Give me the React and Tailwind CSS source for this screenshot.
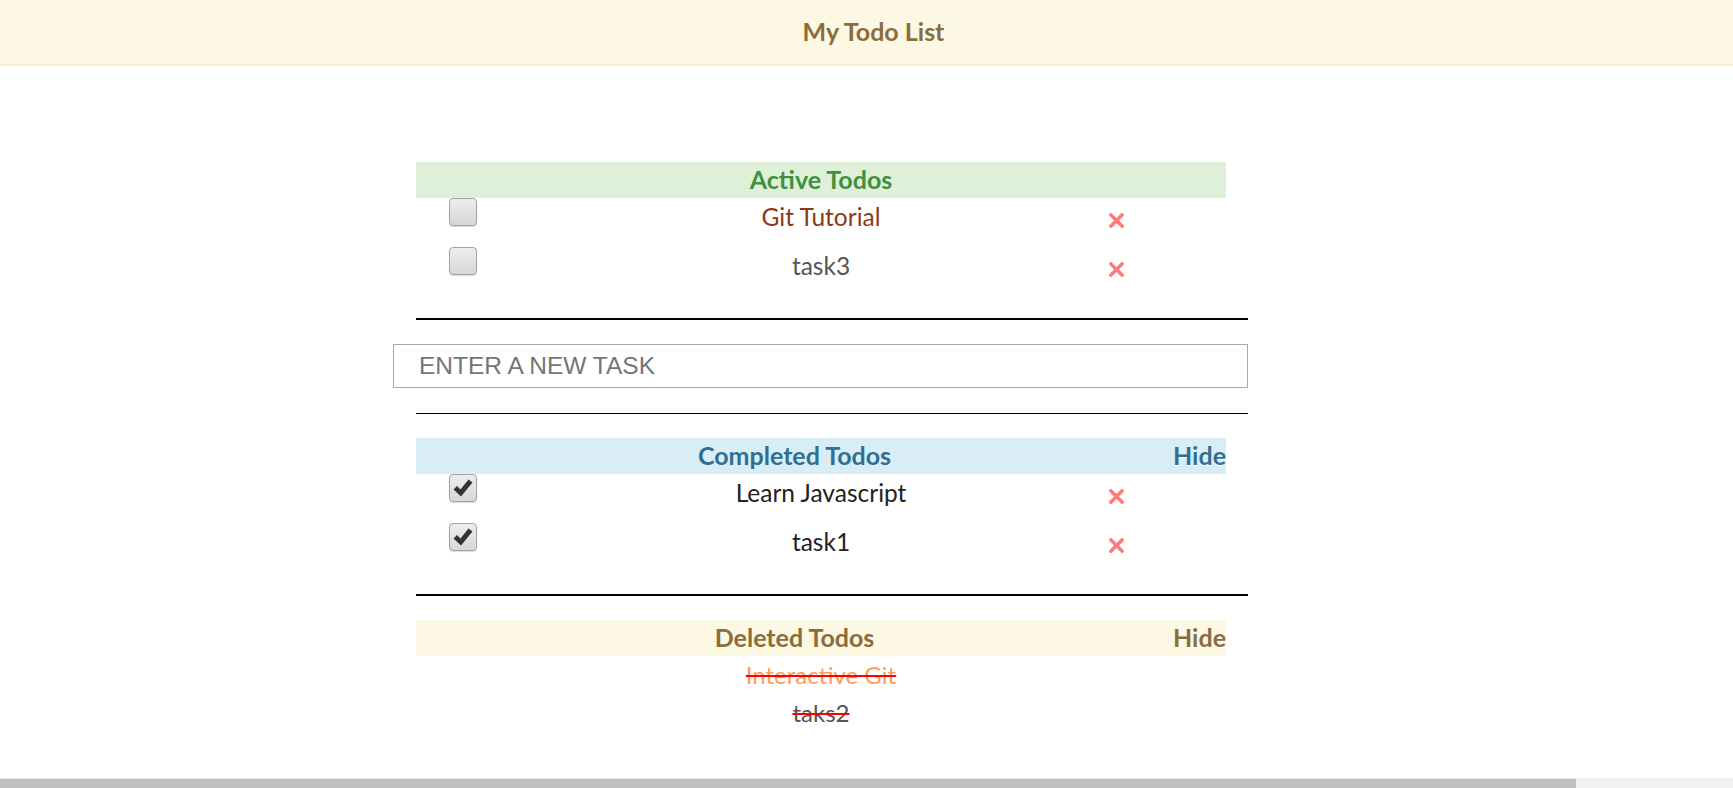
import React from "react"

const font = { fontFamily: "Lato, 'Open Sans', sans-serif" }

const activeTodos = [
    { id: 1, text: "Git Tutorial", color: "text-[#8b3a12]" },
    { id: 2, text: "task3", color: "text-[#555555]" },
]

const completedTodos = [
    { id: 3, text: "Learn Javascript", color: "text-[#222222]" },
    { id: 4, text: "task1", color: "text-[#222222]" },
]

const deletedTodos = [
    { id: 5, text: "Interactive Git", color: "text-[#ff9a5c]" },
    { id: 6, text: "taks2", color: "text-[#555555]" },
]

// ─── small drawings ───

const CheckBox = ({ checked }) => (
    <div className="w-[28px] h-[28px] rounded-[4px] border-[1.5px] border-[#a3a3a3] bg-gradient-to-b from-[#ededed] to-[#d7d7d7] shadow-[0_1px_1px_rgba(0,0,0,0.15)] flex items-center justify-center">
        {checked && (
            <svg width="22" height="20" viewBox="0 0 22 20">
                <path d="M1.5 11.5 L5 8 L8.5 11.5 L16.5 1.5 L20.5 4.5 L9 18.5 Z" fill="#333" />
            </svg>
        )}
    </div>
)

const DeleteIcon = () => (
    <svg width="15" height="15" viewBox="0 0 15 15">
        <path d="M2 2 L13 13 M13 2 L2 13" stroke="#ff7b7b" strokeWidth="3.6" strokeLinecap="square" />
    </svg>
)

// ─── Section header ───

const SectionHeader = ({ title, bg, color, hide }) => (
    <div className={`w-[810px] h-[36px] flex items-center font-bold text-[25px] ${bg} ${color}`}>
        <span className="flex-1 text-center">{title}</span>
        {hide && <span className="[text-shadow:0_1px_0_#fff]">Hide</span>}
    </div>
)

// ─── TodoRow ───

const TodoRow = ({ todo, checked }) => (
    <div className="w-[810px] h-[49px] grid grid-cols-[160px_1fr_160px] items-start">
        <div className="pl-[33px]">
            <CheckBox checked={checked} />
        </div>
        <div className={`pt-[5px] leading-[28px] text-[24.5px] text-center ${todo.color}`}>{todo.text}</div>
        <div className="pt-[15px] pl-[43px]">
            <DeleteIcon />
        </div>
    </div>
)

export default function App() {
    return (
        <div className="h-screen w-full flex flex-col overflow-hidden bg-white" style={font}>
            <header className="h-[66px] shrink-0 bg-[#fcf8e3] border-b-2 border-[#faefc8] flex items-center justify-center pl-[14px]">
                <h1 className="text-[25px] font-bold text-[#8a6d3b]">My Todo List</h1>
            </header>

            <main className="flex-1 pl-[416px] pt-[96px]">
                <div className="w-[832px] flex flex-col">
                    <SectionHeader title="Active Todos" bg="bg-[#dff0d8]" color="text-[#3e923f]" />
                    {activeTodos.map(t => <TodoRow key={t.id} todo={t} checked={false} />)}

                    <hr className="mt-[22px] border-0 h-[2px] bg-black" />

                    <input
                        type="text"
                        placeholder="ENTER A NEW TASK"
                        className="mt-[24px] -ml-[23px] w-[855px] h-[44px] border border-[#a9a9a9] pl-[25px] text-[24.5px] placeholder:text-[#757575] outline-none"
                        style={{ fontFamily: "'Liberation Sans', Arial, sans-serif" }}
                    />

                    <hr className="mt-[25px] border-0 h-[1px] bg-black" />

                    <div className="mt-[24px]">
                        <SectionHeader title="Completed Todos" bg="bg-[#d9edf7]" color="text-[#2f6f91]" hide />
                    </div>
                    {completedTodos.map(t => <TodoRow key={t.id} todo={t} checked />)}

                    <hr className="mt-[22px] border-0 h-[2px] bg-black" />

                    <div className="mt-[24px]">
                        <SectionHeader title="Deleted Todos" bg="bg-[#fcf8e3]" color="text-[#8a6d3b]" hide />
                    </div>
                    <ul className="w-[810px]">
                        {deletedTodos.map(t => (
                            <li key={t.id} className="h-[38px] flex items-center justify-center">
                                <span className={`text-[24px] line-through decoration-[#ff0000] decoration-2 ${t.color}`}>
                                    {t.text}
                                </span>
                            </li>
                        ))}
                    </ul>
                </div>
            </main>

            <div className="h-[10px] shrink-0 flex border-t border-[#e8e8e8]">
                <div className="w-[1576px] bg-[#c1c1c1]" />
                <div className="flex-1 bg-[#f1f1f1]" />
            </div>
        </div>
    )
}
